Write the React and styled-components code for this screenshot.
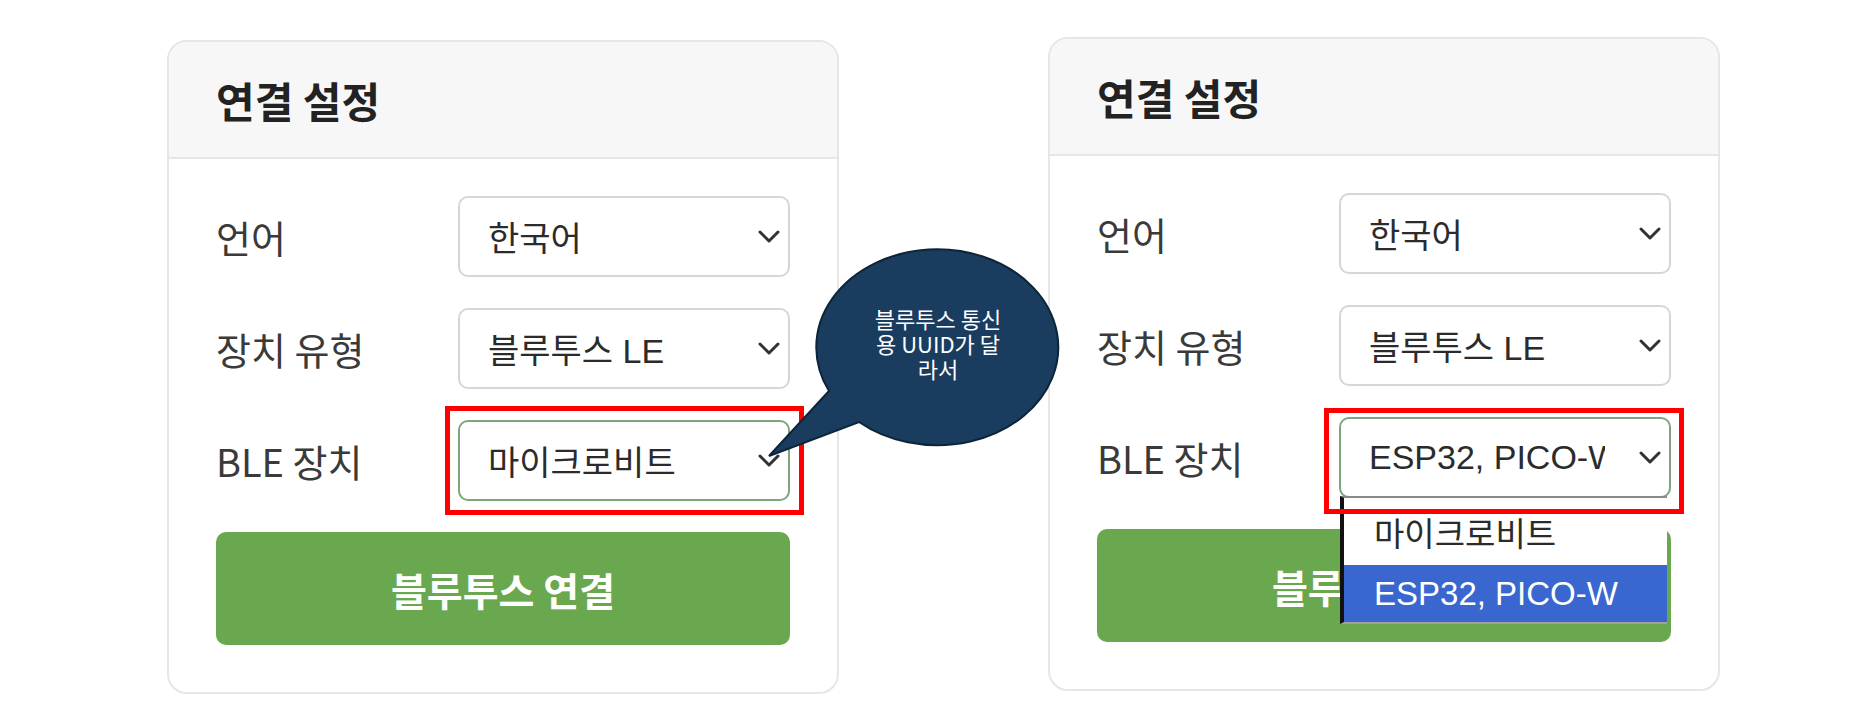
import React from 'react';
import styled, { createGlobalStyle } from 'styled-components';

const GlobalStyle = createGlobalStyle`
  body {
    margin: 0;
    background: #fff;
  }
`;

const Page = styled.div`
  position: relative;
  width: 1867px;
  height: 726px;
  display: flex;
  align-items: flex-start;
  gap: 209px;
  padding: 37px 0 0 167px;
  box-sizing: border-box;
  overflow: hidden;
`;

const Card = styled.div`
  width: 672px;
  margin-top: ${p => p.$offset || 0}px;
  border: 2px solid #e6e6e6;
  border-radius: 20px;
  background: #fff;
  box-sizing: border-box;
`;

const Header = styled.div`
  height: 115px;
  display: flex;
  align-items: center;
  padding-left: 47px;
  background: #f7f7f7;
  border-bottom: 2px solid #e6e6e6;
  border-radius: 18px 18px 0 0;

  h2 {
    margin: 0;
    font-family: "Noto Sans CJK KR", sans-serif;
    font-size: 42px;
    font-weight: 700;
    color: #222;
  }
`;

const Body = styled.div`
  display: flex;
  flex-direction: column;
  gap: 31px;
  padding: 37px 47px 47px;
`;

const Row = styled.div`
  display: grid;
  grid-template-columns: 242px minmax(0, 1fr);
  align-items: center;
  height: 81px;
`;

const Label = styled.span`
  font-family: "Noto Sans CJK KR", sans-serif;
  font-size: 38px;
  font-weight: 400;
  color: #3a3a3a;
`;

const SelectBox = styled.div`
  position: relative;
  min-width: 0;
  height: 81px;
  box-sizing: border-box;
  display: flex;
  align-items: center;
  gap: 34px;
  padding: 0 8px 0 28px;
  border: 2px solid ${p => (p.$focus ? '#7fa57f' : '#d6d6d6')};
  border-radius: 10px;
  background: #fff;
  font-family: "Liberation Sans", "Noto Sans CJK KR", sans-serif;
  font-size: 34px;
  color: #2b2b2b;
`;

const Value = styled.span`
  flex: 1;
  min-width: 0;
  overflow: hidden;
  white-space: nowrap;
`;

const Highlight = styled.div`
  position: absolute;
  left: ${p => p.$x}px;
  top: ${p => p.$y}px;
  width: ${p => p.$w}px;
  height: ${p => p.$h}px;
  box-sizing: border-box;
  border: 5px solid #ff0000;
  pointer-events: none;
  z-index: 6;
`;

const OptionList = styled.div`
  position: absolute;
  top: 100%;
  left: -1px;
  right: 2px;
  z-index: 5;
  background: #fff;
  border-left: 4px solid #111;
  border-top: 2px solid #8a8a8a;
  border-bottom: 2px solid #a0a0a0;
`;

const Option = styled.div`
  height: ${p => p.$h}px;
  display: flex;
  align-items: center;
  padding-left: 30px;
  font-size: 33px;
  background: ${p => (p.$active ? '#3a67cf' : '#fff')};
  color: ${p => (p.$active ? '#fff' : '#2b2b2b')};
`;

const ConnectButton = styled.button`
  height: 113px;
  border: none;
  border-radius: 10px;
  background: #6aa84f;
  color: #fff;
  font-family: "Noto Sans CJK KR", sans-serif;
  font-size: 39px;
  font-weight: 700;
  cursor: pointer;
`;

const Bubble = styled.svg`
  position: absolute;
  left: 760px;
  top: 245px;
  z-index: 10;
  overflow: visible;
`;

const BubbleText = styled.div`
  position: absolute;
  left: 808px;
  top: 306px;
  width: 260px;
  z-index: 11;
  text-align: center;
  font-family: "Noto Sans CJK KR", sans-serif;
  font-size: 22px;
  line-height: 25px;
  color: #fff;
`;

const Chevron = () => (
  <svg width="22" height="13" viewBox="0 0 22 13">
    <polyline points="2,2 11,11 20,2" fill="none" stroke="#333" strokeWidth="3" strokeLinecap="round" strokeLinejoin="round" />
  </svg>
);

const Select = ({ value, focus, highlight, options }) => (
  <SelectBox $focus={focus}>
    <Value>{value}</Value>
    <Chevron />
    {highlight && <Highlight $x={highlight[0]} $y={highlight[1]} $w={highlight[2]} $h={highlight[3]} />}
    {options && (
      <OptionList>
        {options.map(o => (
          <Option key={o.label} $h={o.h} $active={o.active}>{o.label}</Option>
        ))}
      </OptionList>
    )}
  </SelectBox>
);

const SettingsCard = ({ offset, device, highlight, options }) => (
  <Card $offset={offset}>
    <Header>
      <h2>연결 설정</h2>
    </Header>
    <Body>
      <Row>
        <Label>언어</Label>
        <Select value="한국어" />
      </Row>
      <Row>
        <Label>장치 유형</Label>
        <Select value="블루투스 LE" />
      </Row>
      <Row>
        <Label>BLE 장치</Label>
        <Select value={device} focus highlight={highlight} options={options} />
      </Row>
      <ConnectButton>블루투스 연결</ConnectButton>
    </Body>
  </Card>
);

export default function App() {
  return (
    <Page>
      <GlobalStyle />
      <SettingsCard offset={3} device="마이크로비트" highlight={[-15, -16, 359, 109]} />
      <SettingsCard
        device="ESP32, PICO-W"
        highlight={[-17, -11, 360, 106]}
        options={[
          { label: '마이크로비트', h: 67 },
          { label: 'ESP32, PICO-W', h: 57, active: true },
        ]}
      />
      <Bubble width="310" height="220" viewBox="760 245 310 220">
        <path
          d="M829 391 L769 456 L859 422 A121 98 0 1 0 829 391 Z"
          fill="#1a3c5f"
          stroke="#0c2538"
          strokeWidth="2"
          strokeLinejoin="miter"
        />
      </Bubble>
      <BubbleText>
        블루투스 통신<br />용 UUID가 달<br />라서
      </BubbleText>
    </Page>
  );
}
